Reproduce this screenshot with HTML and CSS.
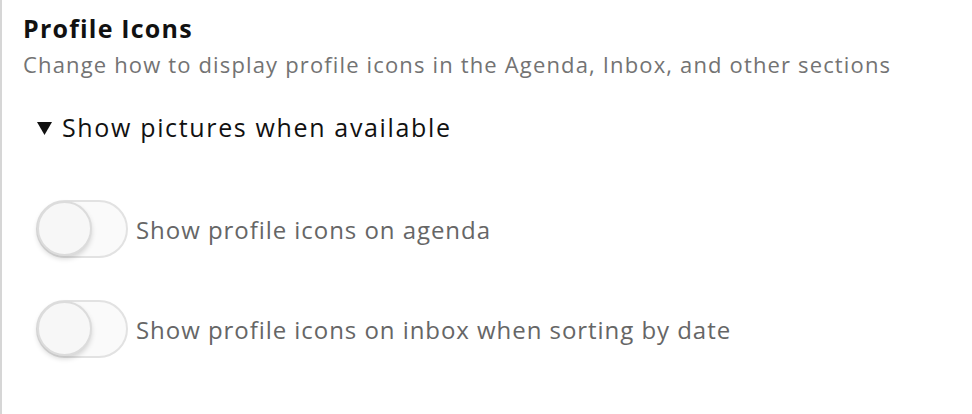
FILE: index.html
```html
<!DOCTYPE html>
<html lang="en">
<head>
    <meta charset="UTF-8">
    <meta name="viewport" content="width=device-width, initial-scale=1.0">
    <title>Profile Icons</title>
    <link rel="stylesheet" href="styles.css">
</head>
<body>

<div class="section">
    <h2 class="section-title">Profile Icons</h2>
    <p class="section-desc">Change how to display profile icons in the Agenda, Inbox, and other sections</p>

    <!-- Collapsible group -->
    <details class="group" open>
        <summary>
            <svg class="caret" width="15" height="13" viewBox="0 0 15 13"><polygon points="0,0 15,0 7.5,13" fill="#111"/></svg>
            Show pictures when available
        </summary>

        <label class="toggle-row">
            <input type="checkbox" class="toggle-input">
            <span class="toggle"><span class="knob"></span></span>
            <span class="toggle-label">Show profile icons on agenda</span>
        </label>

        <label class="toggle-row">
            <input type="checkbox" class="toggle-input">
            <span class="toggle"><span class="knob"></span></span>
            <span class="toggle-label">Show profile icons on inbox when sorting by date</span>
        </label>
    </details>
</div>

</body>
</html>
```
FILE: styles.css
```css
body {
    margin: 0;
    background: #fff;
    font-family: "Open Sans", "Lato", sans-serif;
}

.section {
    border-left: 2px solid #d6d6d6;
    min-height: 414px;
    box-sizing: border-box;
    padding: 12px 0 0 21px;
}

.section-title {
    margin: 0;
    font-size: 25px;
    font-weight: 700;
    letter-spacing: 1.2px;
    color: #111;
    line-height: 32px;
}

.section-desc {
    margin: 6px 0 0;
    font-size: 22px;
    letter-spacing: 1.15px;
    color: #737373;
    line-height: 28px;
}

.group summary {
    display: flex;
    align-items: center;
    list-style: none;
    margin-top: 34px;
    padding-left: 14px;
    font-size: 25px;
    letter-spacing: 1.65px;
    color: #111;
    line-height: 30px;
    cursor: pointer;
}

.group summary::-webkit-details-marker {
    display: none;
}

.caret {
    margin-right: 10px;
    margin-top: 2px;
}

.toggle-row {
    display: flex;
    align-items: center;
    gap: 8px;
    padding-left: 13px;
    margin-top: 58px;
    cursor: pointer;
}

.toggle-row + .toggle-row {
    margin-top: 42px;
}

.toggle-input {
    display: none;
}

.toggle {
    position: relative;
    width: 88px;
    height: 54px;
    border: 2px solid #e2e2e2;
    border-radius: 30px;
    background: #fafafa;
    flex-shrink: 0;
}

.knob {
    position: absolute;
    left: -1px;
    top: -1px;
    width: 55px;
    height: 55px;
    border-radius: 50%;
    background: #f7f7f7;
    border: 2px solid #dcdcdc;
    box-sizing: border-box;
    box-shadow: 0 3px 5px rgba(0, 0, 0, 0.15);
}

.toggle-label {
    font-size: 24px;
    letter-spacing: 0.95px;
    color: #666;
}
```
